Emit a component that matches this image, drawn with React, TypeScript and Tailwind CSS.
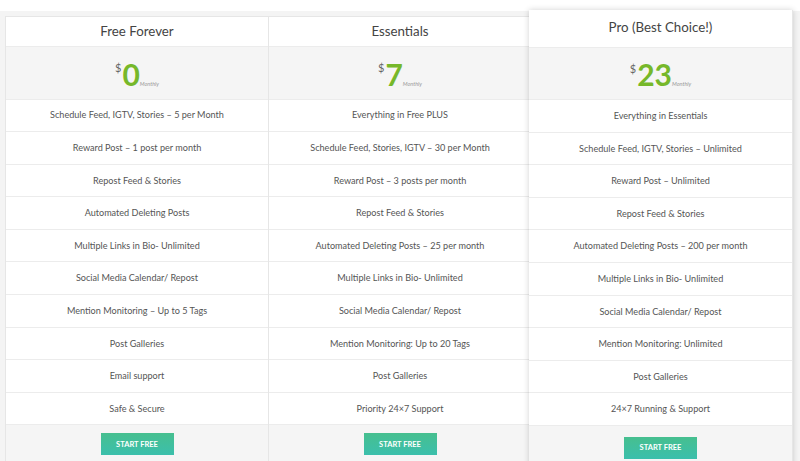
import React from 'react';

type Plan = {
  name: string;
  price: string;
  features: string[];
  featured?: boolean;
};

const plans: Plan[] = [
  {
    name: 'Free Forever',
    price: '0',
    features: [
      'Schedule Feed, IGTV, Stories – 5 per Month',
      'Reward Post – 1 post per month',
      'Repost Feed & Stories',
      'Automated Deleting Posts',
      'Multiple Links in Bio- Unlimited',
      'Social Media Calendar/ Repost',
      'Mention Monitoring – Up to 5 Tags',
      'Post Galleries',
      'Email support',
      'Safe & Secure',
    ],
  },
  {
    name: 'Essentials',
    price: '7',
    features: [
      'Everything in Free PLUS',
      'Schedule Feed, Stories, IGTV – 30 per Month',
      'Reward Post – 3 posts per month',
      'Repost Feed & Stories',
      'Automated Deleting Posts – 25 per month',
      'Multiple Links in Bio- Unlimited',
      'Social Media Calendar/ Repost',
      'Mention Monitoring: Up to 20 Tags',
      'Post Galleries',
      'Priority 24×7 Support',
    ],
  },
  {
    name: 'Pro (Best Choice!)',
    price: '23',
    featured: true,
    features: [
      'Everything in Essentials',
      'Schedule Feed, IGTV, Stories – Unlimited',
      'Reward Post – Unlimited',
      'Repost Feed & Stories',
      'Automated Deleting Posts – 200 per month',
      'Multiple Links in Bio- Unlimited',
      'Social Media Calendar/ Repost',
      'Mention Monitoring: Unlimited',
      'Post Galleries',
      '24×7 Running & Support',
    ],
  },
];

export default function App() {
  return (
    <div className="h-[461px] w-[800px] overflow-hidden bg-white font-['Lato','Liberation_Sans',sans-serif]">
      <div className="mt-[11px] flex items-start bg-[#f4f4f4] pl-[5px] pt-[5px]">
        {/* free + essentials share one bordered table */}
        <div className="flex w-[527px] shrink-0 border-l border-t border-[#e6e6e6] bg-white">
          <PlanColumn plan={plans[0]} />
          <PlanColumn plan={plans[1]} />
        </div>
        <div className="relative z-10 -ml-[3px] -mt-[6px] w-[264px] shrink-0 shadow-[0_0_6px_rgba(0,0,0,0.18)]">
          <PlanColumn plan={plans[2]} />
        </div>
      </div>
    </div>
  );
}

function PlanColumn({ plan }: { plan: Plan }) {
  const pro = plan.featured;
  return (
    <div className="flex flex-1 flex-col border-r border-[#e6e6e6] bg-white">
      <div
        className={`flex items-center justify-center border-b border-[#ececec] text-[13.3px] text-[#444] ${
          pro ? 'h-[37.5px] pb-[1px]' : 'h-[30px]'
        }`}
      >
        {plan.name}
      </div>
      <div className="flex h-[52.5px] items-center justify-center border-b border-[#ececec] bg-[#f5f5f5]">
        <div className="mt-[2px] flex items-end">
          <span className="mb-[12px] mr-[1px] text-[11px] text-[#666]">$</span>
          <span className="text-[30px] font-bold leading-[30px] text-[#76b82a]">{plan.price}</span>
          <span className="mb-[1px] text-[5.5px] italic text-[#999]">Monthly</span>
        </div>
      </div>
      {plan.features.map((f) => (
        <div
          key={f}
          className="flex h-[32.6px] items-center justify-center border-b border-[#ececec] text-[9.1px] text-[#555]"
        >
          {f}
        </div>
      ))}
      <div className={`flex justify-center bg-[#f5f5f5] ${pro ? 'h-[50px] pt-[11px]' : 'h-[40px] pt-[8px]'}`}>
        <button className="h-[22px] w-[73px] bg-gradient-to-b from-[#46bf8f] to-[#3bbfac] text-[7.5px] font-bold uppercase text-white">
          Start Free
        </button>
      </div>
    </div>
  );
}
